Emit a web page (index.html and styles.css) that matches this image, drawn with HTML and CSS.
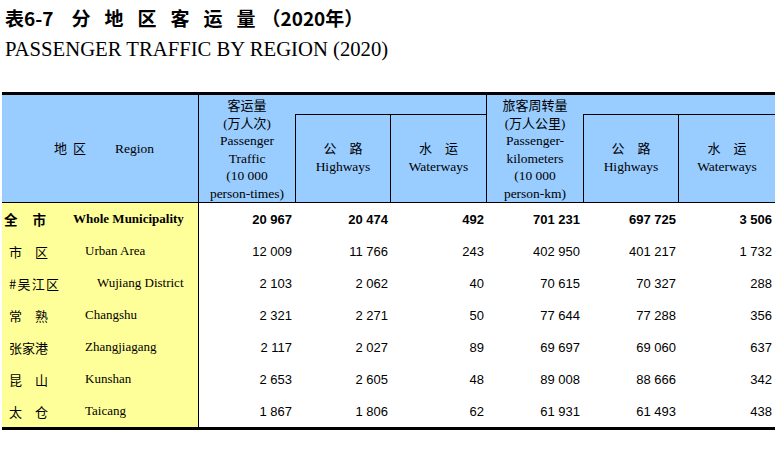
FILE: index.html
```html
<!DOCTYPE html>
<html lang="zh-CN">
<head>
<meta charset="utf-8">
<title>表6-7 分地区客运量（2020年）</title>
<link rel="stylesheet" href="styles.css">
</head>
<body>
<h1 class="title-cn">表6-7<span class="spread">分地区客运</span>量<span class="paren">（2020年）</span></h1>
<p class="title-en">PASSENGER TRAFFIC BY REGION (2020)</p>

<div class="sheet">
  <div class="hd h-region"><span class="zh zh-region">地区</span><span class="en-region">Region</span></div>
  <div class="hd h-main">
    <span class="zh">客运量</span>
    <span class="zh">(万人次)</span>
    <span>Passenger</span>
    <span>Traffic</span>
    <span>(10 000</span>
    <span>person-times)</span>
  </div>
  <div class="hd h-blank1"></div>
  <div class="hd h-main2">
    <span class="zh">旅客周转量</span>
    <span class="zh">(万人公里)</span>
    <span>Passenger-</span>
    <span>kilometers</span>
    <span>(10 000</span>
    <span>person-km)</span>
  </div>
  <div class="hd h-blank2"></div>
  <div class="hd h-sub h-sub1"><span class="zh">公　路</span><span>Highways</span></div>
  <div class="hd h-sub h-sub2"><span class="zh">水　运</span><span>Waterways</span></div>
  <div class="hd h-sub h-sub3"><span class="zh">公　路</span><span>Highways</span></div>
  <div class="hd h-sub h-sub4"><span class="zh">水　运</span><span>Waterways</span></div>

  <div class="rg rg-total"><span class="cn">全市</span><span class="en">Whole Municipality</span></div>
  <div class="num bold">20 967</div><div class="num bold">20 474</div><div class="num bold">492</div><div class="num bold">701 231</div><div class="num bold">697 725</div><div class="num bold">3 506</div>

  <div class="rg"><span class="cn">市区</span><span class="en">Urban Area</span></div>
  <div class="num">12 009</div><div class="num">11 766</div><div class="num">243</div><div class="num">402 950</div><div class="num">401 217</div><div class="num">1 732</div>

  <div class="rg rg-sub"><span class="cn">#吴江区</span><span class="en">Wujiang District</span></div>
  <div class="num">2 103</div><div class="num">2 062</div><div class="num">40</div><div class="num">70 615</div><div class="num">70 327</div><div class="num">288</div>

  <div class="rg"><span class="cn">常熟</span><span class="en">Changshu</span></div>
  <div class="num">2 321</div><div class="num">2 271</div><div class="num">50</div><div class="num">77 644</div><div class="num">77 288</div><div class="num">356</div>

  <div class="rg"><span class="cn">张家港</span><span class="en">Zhangjiagang</span></div>
  <div class="num">2 117</div><div class="num">2 027</div><div class="num">89</div><div class="num">69 697</div><div class="num">69 060</div><div class="num">637</div>

  <div class="rg"><span class="cn">昆山</span><span class="en">Kunshan</span></div>
  <div class="num">2 653</div><div class="num">2 605</div><div class="num">48</div><div class="num">89 008</div><div class="num">88 666</div><div class="num">342</div>

  <div class="rg"><span class="cn">太仓</span><span class="en">Taicang</span></div>
  <div class="num">1 867</div><div class="num">1 806</div><div class="num">62</div><div class="num">61 931</div><div class="num">61 493</div><div class="num">438</div>
</div>
</body>
</html>
```

FILE: styles.css
```css
html, body {
  margin: 0;
  padding: 0;
  background: #ffffff;
  color: #000000;
  overflow: hidden;
}

body {
  font-family: "Liberation Serif", "Noto Sans CJK SC", serif;
}

.title-cn {
  margin: 7px 0 0 5px;
  font-family: "Noto Sans CJK SC", sans-serif;
  font-weight: bold;
  font-size: 19px;
  line-height: 22px;
  white-space: nowrap;
}

.title-cn .spread {
  margin-left: 18px;
  letter-spacing: 14px;
}

.title-cn .paren {
  margin-left: 6px;
}

.title-en {
  margin: 8px 0 0 5px;
  font-family: "Liberation Serif", serif;
  font-size: 20.7px;
  line-height: 24px;
  white-space: nowrap;
}

.sheet {
  display: grid;
  grid-template-columns: 197px repeat(6, 96px);
  grid-template-rows: 20px 88px repeat(7, 32px);
  width: 773px;
  margin: 31px 0 0 2px;
  border-top: 3px solid #000;
  border-bottom: 3px solid #000;
}

.hd {
  box-sizing: border-box;
  background: #99ccff;
  display: flex;
  flex-direction: column;
  align-items: center;
  justify-content: center;
  text-align: center;
  font-family: "Liberation Serif", "Noto Sans CJK SC", serif;
  font-size: 13.5px;
  line-height: 17.5px;
  white-space: nowrap;
  border-bottom: 1px solid #000;
}

.hd .zh {
  font-size: 13px;
}

.h-region {
  grid-row: 1 / 3;
  grid-column: 1;
  flex-direction: row;
  justify-content: flex-start;
  padding-left: 52px;
  border-right: 1px solid #000;
}

.h-region .zh-region {
  letter-spacing: 6px;
}

.h-region .en-region {
  margin-left: 23px;
}

.h-main {
  grid-row: 1 / 3;
  grid-column: 2;
  padding-top: 2px;
}

.h-blank1 {
  grid-row: 1;
  grid-column: 3 / 5;
  border-right: 1px solid #000;
}

.h-main2 {
  grid-row: 1 / 3;
  grid-column: 5;
  padding-top: 2px;
}

.h-blank2 {
  grid-row: 1;
  grid-column: 6 / 8;
}

.h-sub {
  grid-row: 2;
  padding-bottom: 2px;
}

.h-sub .zh {
  margin-bottom: 1px;
}

.h-sub1 {
  grid-column: 3;
  border-left: 1px solid #000;
  border-right: 1px solid #000;
}

.h-sub2 {
  grid-column: 4;
  border-right: 1px solid #000;
}

.h-sub3 {
  grid-column: 6;
  border-left: 1px solid #000;
  border-right: 1px solid #000;
}

.h-sub4 {
  grid-column: 7;
}

.rg {
  background: #ffff99;
  border-right: 1px solid #000;
  display: flex;
  align-items: center;
  padding-left: 7px;
  white-space: nowrap;
}

.rg .cn {
  width: 39px;
  margin-right: 37px;
  font-family: "Noto Sans CJK SC", sans-serif;
  font-size: 13px;
  text-align-last: justify;
}

.rg .en {
  font-family: "Liberation Serif", serif;
  font-size: 13px;
}

.rg-total {
  padding-left: 2px;
}

.rg-total .cn {
  width: 42px;
  margin-right: 27px;
  font-weight: bold;
  font-size: 13.5px;
}

.rg-total .en {
  font-weight: bold;
}

.rg-sub .cn {
  width: 50px;
  margin-right: 38px;
}

.num {
  display: flex;
  align-items: center;
  justify-content: flex-end;
  padding-right: 3px;
  font-family: "Liberation Sans", sans-serif;
  font-size: 13px;
  white-space: nowrap;
}

.num.bold {
  font-weight: bold;
}
```
